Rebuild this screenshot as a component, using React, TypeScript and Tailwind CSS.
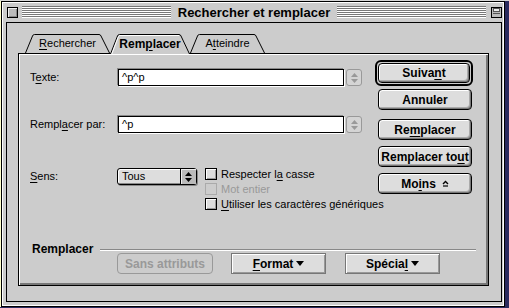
import React from "react";

const U = ({ children }: { children: React.ReactNode }) => (
  <span className="underline underline-offset-2 decoration-1">{children}</span>
);

const PushButton = ({ children, className = "" }: { children: React.ReactNode; className?: string }) => (
  <div
    className={`flex items-center justify-center whitespace-nowrap rounded-[4px] border border-black bg-[#dddddd] text-[12px] font-bold leading-none shadow-[inset_1px_1px_0_#fff,inset_-1px_-1px_0_#777,inset_-2px_-2px_0_#aaa] ${className}`}
  >
    {children}
  </div>
);

const BevelButton = ({ children }: { children: React.ReactNode }) => (
  <div className="flex h-[21px] w-[95px] items-center justify-center gap-[3px] border border-[#777] bg-[#dddddd] text-[12px] font-bold leading-none shadow-[inset_1px_1px_0_#fff,inset_-1px_-1px_0_#999]">
    {children}
  </div>
);

const DownTri = () => (
  <svg width="8" height="5" viewBox="0 0 8 5">
    <polygon points="0,0 8,0 4,5" fill="#000" />
  </svg>
);

const Tab = ({ w, active, children }: { w: number; active?: boolean; children: React.ReactNode }) => {
  const h = active ? 20 : 19;
  return (
    <div
      className={`relative flex shrink-0 items-center justify-center leading-none ${active ? "z-10 h-[20px] text-[12px] font-bold" : "h-[19px] text-[11px]"}`}
      style={{ width: w }}
    >
      <svg className="absolute inset-0" width={w} height={h} viewBox={`0 0 ${w} ${h}`}>
        <path
          d={`M0.5 ${h} L7.5 2 Q8 0.5 9.5 0.5 L${w - 11} 0.5 Q${w - 9.5} 0.5 ${w - 9} 2 L${w - 0.5} ${h}`}
          fill="#cccccc"
          stroke="#000"
        />
        {active && (
          <path d={`M1.8 ${h} L8.5 2.5 Q9 1.5 10 1.5 L${w - 11} 1.5`} fill="none" stroke="#fff" />
        )}
      </svg>
      <span className="relative pb-[1px]">{children}</span>
    </div>
  );
};

const Stripes = ({ w }: { w: number }) => (
  <div className="flex flex-col" style={{ width: w }}>
    {[0, 1, 2, 3, 4, 5].map((i) => (
      <div key={i} className="h-[2px] border-t border-[#777] bg-white" />
    ))}
  </div>
);

const Spinner = () => (
  <div className="ml-[2px] flex h-[17px] w-[16px] shrink-0 flex-col items-center justify-center gap-[2px] rounded-[3px] border border-[#999] bg-[#d4d4d4]">
    <svg width="7" height="4" viewBox="0 0 7 4">
      <polygon points="0,4 7,4 3.5,0" fill="#999" />
    </svg>
    <svg width="7" height="4" viewBox="0 0 7 4">
      <polygon points="0,0 7,0 3.5,4" fill="#999" />
    </svg>
  </div>
);

const Field = ({ value }: { value: string }) => (
  <div className="flex h-[17px] w-[226px] shrink-0 items-center border border-black bg-white pl-[3px] text-[11px] leading-none shadow-[-1px_-1px_0_#888,1px_1px_0_#fff]">
    {value}
  </div>
);

const Check = ({ children, disabled }: { children: React.ReactNode; disabled?: boolean }) => (
  <div
    className={`flex h-[12px] items-center gap-[4px] whitespace-nowrap text-[11px] leading-none ${disabled ? "text-[#999]" : "text-black"}`}
  >
    <div
      className={`h-[12px] w-[12px] shrink-0 border ${disabled ? "border-[#aaa] bg-[#cccccc]" : "border-black bg-[#dddddd] shadow-[inset_1px_1px_0_#fff,inset_-1px_-1px_0_#999]"}`}
    />
    <span>{children}</span>
  </div>
);

export default function App() {
  return (
    <div className="flex h-[308px] w-[509px] flex-col overflow-hidden bg-[#2b2b5e] font-['Liberation_Sans',Arial,sans-serif] text-black">
      <div className="h-px bg-[#d8d8d8]" />
      <div className="flex">
        <div className="w-px bg-[#ffffcc]" />
        {/* window */}
        <div className="flex h-[306px] w-[504px] flex-col border border-black bg-[#cccccc] pb-[4px] pl-[4px] pr-[2px] shadow-[inset_0_0_0_1px_#fff]">
          {/* title bar */}
          <div className="flex h-[20px] items-center">
            <div className="ml-[1px] h-[11px] w-[11px] border border-black bg-[#bbbbbb] shadow-[inset_1px_1px_0_#eee,inset_-1px_-1px_0_#888]" />
            <div className="ml-[4px]">
              <Stripes w={149} />
            </div>
            <div className="w-[166px] text-center text-[13px] font-bold leading-none">Rechercher et remplacer</div>
            <Stripes w={149} />
            <div className="ml-[5px] flex h-[11px] w-[11px] flex-col justify-center gap-[1px] border border-black bg-[#bbbbbb] px-[1px]">
              <div className="h-[4px] border border-[#555] bg-[#eee]" />
              <div className="h-[3px] border-t border-[#555]" />
            </div>
          </div>

          {/* content */}
          <div className="flex flex-1 flex-col border border-black bg-[#cccccc]">
            <div className="mt-[11px] flex h-[19px] items-start pl-[18px]">
              <Tab w={85}>
                <U>R</U>echercher
              </Tab>
              <Tab w={80} active>
                Rem<U>p</U>lacer
              </Tab>
              <Tab w={75}>
                A<U>t</U>teindre
              </Tab>
            </div>

            {/* panel */}
            <div className="ml-[11px] flex h-[233px] w-[471px] flex-col border border-black bg-[#cccccc] shadow-[inset_1px_1px_0_#fff,inset_-2px_-2px_0_#777]">
              <div className="flex pt-[6px]">
                <div className="mt-[9px] w-[343px] shrink-0 pl-[11px]">
                  <div className="flex h-[17px] items-center">
                    <div className="w-[88px] shrink-0 text-[11px] leading-none">
                      T<U>e</U>xte:
                    </div>
                    <Field value="^p^p" />
                    <Spinner />
                  </div>
                  <div className="mt-[30px] flex h-[17px] items-center">
                    <div className="w-[88px] shrink-0 text-[11px] leading-none">
                      Rempl<U>a</U>cer par:
                    </div>
                    <Field value="^p" />
                    <Spinner />
                  </div>
                  <div className="mt-[35px] flex items-start">
                    <div className="flex h-[17px] w-[87px] shrink-0 items-center text-[11px] leading-none">
                      <U>S</U>ens:
                    </div>
                    <div className="flex h-[17px] w-[80px] shrink-0 rounded-[3px] border border-black bg-[#dddddd] shadow-[inset_1px_1px_0_#fff,inset_-1px_-1px_0_#888,1px_1px_0_#888]">
                      <div className="flex flex-1 items-center pl-[4px] text-[11px] leading-none">Tous</div>
                      <div className="flex w-[16px] flex-col items-center justify-center gap-[2px] border-l border-black bg-[#bbbbbb] shadow-[inset_1px_1px_0_#eee]">
                        <svg width="7" height="4" viewBox="0 0 7 4">
                          <polygon points="0,4 7,4 3.5,0" fill="#000" />
                        </svg>
                        <svg width="7" height="4" viewBox="0 0 7 4">
                          <polygon points="0,0 7,0 3.5,4" fill="#000" />
                        </svg>
                      </div>
                    </div>
                    <div className="ml-[8px] flex shrink-0 flex-col gap-[3px]">
                      <Check>
                        Respecter l<U>a</U> casse
                      </Check>
                      <Check disabled>Mot entier</Check>
                      <Check>
                        <U>U</U>tiliser les caractères génériques
                      </Check>
                    </div>
                  </div>
                </div>

                <div className="ml-[13px] flex w-[98px] shrink-0 flex-col">
                  <div className="h-[26px] w-[98px] rounded-[6px] border-2 border-black p-px">
                    <PushButton className="h-[20px] w-[92px]">
                      Suiva<U>n</U>t
                    </PushButton>
                  </div>
                  <PushButton className="ml-[3px] mt-[3px] h-[21px] w-[94px]">Annuler</PushButton>
                  <PushButton className="ml-[3px] mt-[9px] h-[21px] w-[94px]">
                    Re<U>m</U>placer
                  </PushButton>
                  <PushButton className="ml-[3px] mt-[6px] h-[21px] w-[94px]">
                    Remplacer to<U>u</U>t
                  </PushButton>
                  <PushButton className="ml-[3px] mt-[6px] h-[21px] w-[94px] gap-[6px]">
                    <span>
                      Mo<U>i</U>ns
                    </span>
                    <svg width="7" height="7" viewBox="0 0 7 7">
                      <polyline points="1,4 3.5,1.5 6,4" fill="none" stroke="#000" strokeWidth="1.4" />
                      <line x1="1" y1="6" x2="6" y2="6" stroke="#000" strokeWidth="1.2" />
                    </svg>
                  </PushButton>
                </div>
              </div>

              {/* bottom group */}
              <div className="mt-auto pb-[11px]">
                <div className="flex h-[12px] items-center pl-[13px]">
                  <div className="w-[68px] shrink-0 text-[12px] font-bold leading-none">Remplacer</div>
                  <div className="mt-[2px] h-[2px] w-[376px] border-t border-[#888] bg-white" />
                </div>
                <div className="-mt-[2px] flex h-[21px] pl-[98px]">
                  <div className="flex h-[21px] w-[96px] items-center justify-center rounded-[4px] border border-[#999] text-[12px] font-bold leading-none text-[#999]">
                    Sans attributs
                  </div>
                  <div className="ml-[18px]">
                    <BevelButton>
                      <span>
                        <U>F</U>ormat
                      </span>
                      <DownTri />
                    </BevelButton>
                  </div>
                  <div className="ml-[19px]">
                    <BevelButton>
                      <span>
                        Spécia<U>l</U>
                      </span>
                      <DownTri />
                    </BevelButton>
                  </div>
                </div>
              </div>
            </div>
          </div>
        </div>
        <div className="flex-1 bg-[#2b2b5e]" />
      </div>
    </div>
  );
}
